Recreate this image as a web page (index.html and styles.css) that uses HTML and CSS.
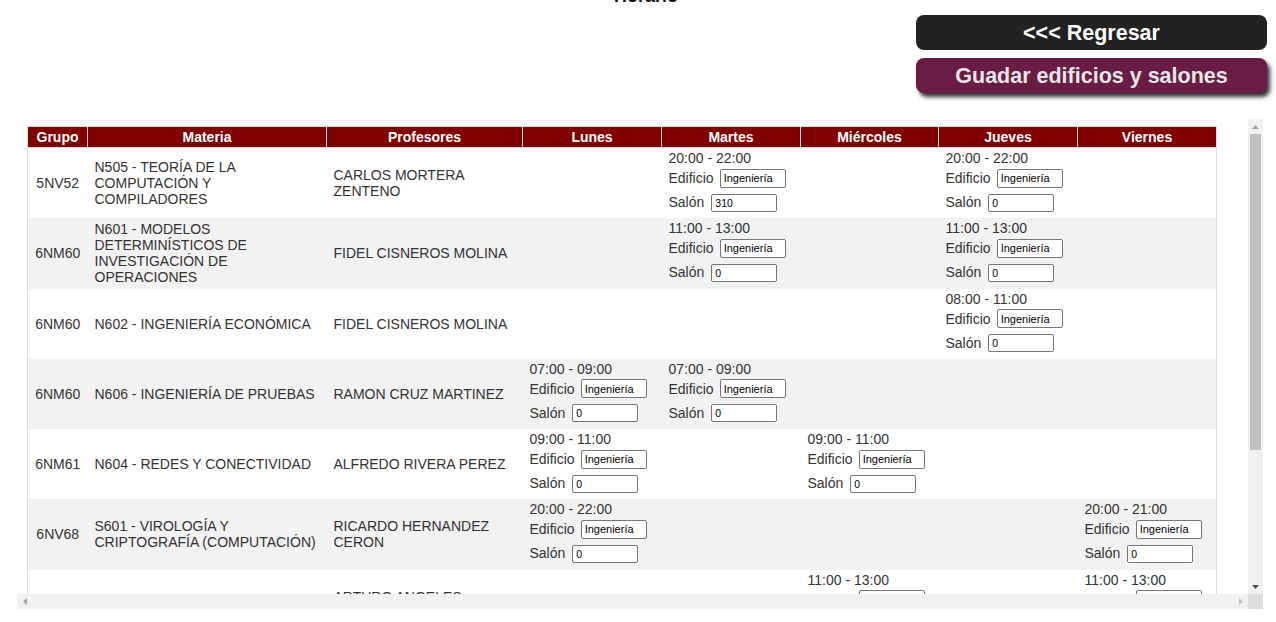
FILE: index.html
```html
<!DOCTYPE html>
<html lang="es">
<head>
<meta charset="utf-8">
<title>Horario</title>
<link rel="stylesheet" href="styles.css">
</head>
<body>
<h2 class="title">Horario</h2>
<div class="actions">
  <button class="btn btn-back">&lt;&lt;&lt; Regresar</button>
  <button class="btn btn-save">Guadar edificios y salones</button>
</div>
<div class="frame">
  <div class="viewport">
  <table class="schedule">
    <colgroup>
      <col class="c-grupo"><col class="c-materia"><col class="c-prof">
      <col class="c-day"><col class="c-day"><col class="c-day3"><col class="c-day"><col class="c-day">
    </colgroup>
    <thead>
      <tr><th>Grupo</th><th>Materia</th><th>Profesores</th><th>Lunes</th><th>Martes</th><th>Miércoles</th><th>Jueves</th><th>Viernes</th></tr>
    </thead>
    <tbody>
      <tr>
        <td class="grupo">5NV52</td><td>N505 - TEORÍA DE LA COMPUTACIÓN Y COMPILADORES</td><td>CARLOS MORTERA ZENTENO</td>
        <td></td>
        <td><div class="time">20:00 - 22:00</div><label class="field">Edificio<input class="in in-ed" value="Ingeniería"></label><label class="field">Salón<input class="in in-sal" value="310"></label></td>
        <td></td>
        <td><div class="time">20:00 - 22:00</div><label class="field">Edificio<input class="in in-ed" value="Ingeniería"></label><label class="field">Salón<input class="in in-sal" value="0"></label></td>
        <td></td>
      </tr>
      <tr>
        <td class="grupo">6NM60</td><td>N601 - MODELOS DETERMINÍSTICOS DE INVESTIGACIÓN DE OPERACIONES</td><td>FIDEL CISNEROS MOLINA</td>
        <td></td>
        <td><div class="time">11:00 - 13:00</div><label class="field">Edificio<input class="in in-ed" value="Ingeniería"></label><label class="field">Salón<input class="in in-sal" value="0"></label></td>
        <td></td>
        <td><div class="time">11:00 - 13:00</div><label class="field">Edificio<input class="in in-ed" value="Ingeniería"></label><label class="field">Salón<input class="in in-sal" value="0"></label></td>
        <td></td>
      </tr>
      <tr>
        <td class="grupo">6NM60</td><td>N602 - INGENIERÍA ECONÓMICA</td><td>FIDEL CISNEROS MOLINA</td>
        <td></td><td></td><td></td>
        <td><div class="time">08:00 - 11:00</div><label class="field">Edificio<input class="in in-ed" value="Ingeniería"></label><label class="field">Salón<input class="in in-sal" value="0"></label></td>
        <td></td>
      </tr>
      <tr>
        <td class="grupo">6NM60</td><td>N606 - INGENIERÍA DE PRUEBAS</td><td>RAMON CRUZ MARTINEZ</td>
        <td><div class="time">07:00 - 09:00</div><label class="field">Edificio<input class="in in-ed" value="Ingeniería"></label><label class="field">Salón<input class="in in-sal" value="0"></label></td>
        <td><div class="time">07:00 - 09:00</div><label class="field">Edificio<input class="in in-ed" value="Ingeniería"></label><label class="field">Salón<input class="in in-sal" value="0"></label></td>
        <td></td><td></td><td></td>
      </tr>
      <tr>
        <td class="grupo">6NM61</td><td>N604 - REDES Y CONECTIVIDAD</td><td>ALFREDO RIVERA PEREZ</td>
        <td><div class="time">09:00 - 11:00</div><label class="field">Edificio<input class="in in-ed" value="Ingeniería"></label><label class="field">Salón<input class="in in-sal" value="0"></label></td>
        <td></td>
        <td><div class="time">09:00 - 11:00</div><label class="field">Edificio<input class="in in-ed" value="Ingeniería"></label><label class="field">Salón<input class="in in-sal" value="0"></label></td>
        <td></td><td></td>
      </tr>
      <tr>
        <td class="grupo">6NV68</td><td>S601 - VIROLOGÍA Y CRIPTOGRAFÍA (COMPUTACIÓN)</td><td>RICARDO HERNANDEZ CERON</td>
        <td><div class="time">20:00 - 22:00</div><label class="field">Edificio<input class="in in-ed" value="Ingeniería"></label><label class="field">Salón<input class="in in-sal" value="0"></label></td>
        <td></td><td></td><td></td>
        <td><div class="time">20:00 - 21:00</div><label class="field">Edificio<input class="in in-ed" value="Ingeniería"></label><label class="field">Salón<input class="in in-sal" value="0"></label></td>
      </tr>
      <tr>
        <td class="grupo">6NV61</td><td>N607 - SISTEMAS DISTRIBUIDOS</td><td>ARTURO ANGELES CASTRO</td>
        <td></td><td></td>
        <td><div class="time">11:00 - 13:00</div><label class="field">Edificio<input class="in in-ed" value="Ingeniería"></label><label class="field">Salón<input class="in in-sal" value="0"></label></td>
        <td></td>
        <td><div class="time">11:00 - 13:00</div><label class="field">Edificio<input class="in in-ed" value="Ingeniería"></label><label class="field">Salón<input class="in in-sal" value="0"></label></td>
      </tr>
      <tr>
        <td class="grupo">6NV62</td><td>N608 - INTELIGENCIA ARTIFICIAL</td><td>MIGUEL SANTIAGO LOPEZ</td>
        <td><div class="time">13:00 - 15:00</div><label class="field">Edificio<input class="in in-ed" value="Ingeniería"></label><label class="field">Salón<input class="in in-sal" value="0"></label></td>
        <td></td><td></td>
        <td><div class="time">13:00 - 15:00</div><label class="field">Edificio<input class="in in-ed" value="Ingeniería"></label><label class="field">Salón<input class="in in-sal" value="0"></label></td>
        <td></td>
      </tr>
      <tr>
        <td class="grupo">6NV64</td><td>N609 - BASES DE DATOS</td><td>LAURA GARCIA MENDOZA</td>
        <td></td>
        <td><div class="time">15:00 - 17:00</div><label class="field">Edificio<input class="in in-ed" value="Ingeniería"></label><label class="field">Salón<input class="in in-sal" value="0"></label></td>
        <td></td><td></td>
        <td><div class="time">15:00 - 17:00</div><label class="field">Edificio<input class="in in-ed" value="Ingeniería"></label><label class="field">Salón<input class="in in-sal" value="0"></label></td>
      </tr>
    </tbody>
  </table>
  </div>
  <div class="vbar">
    <div class="arrow"><svg width="7" height="4" viewBox="0 0 7 4"><polygon points="0,4 7,4 3.5,0" fill="#a3a3a3"/></svg></div>
    <div class="vtrack"><div class="vthumb"></div></div>
    <div class="arrow"><svg width="7" height="4" viewBox="0 0 7 4"><polygon points="0,0 7,0 3.5,4" fill="#505050"/></svg></div>
  </div>
  <div class="hbar">
    <div class="arrow"><svg width="4" height="7" viewBox="0 0 4 7"><polygon points="4,0 4,7 0,3.5" fill="#a3a3a3"/></svg></div>
    <div class="htrack"></div>
    <div class="arrow"><svg width="4" height="7" viewBox="0 0 4 7"><polygon points="0,0 0,7 4,3.5" fill="#c2c2c2"/></svg></div>
  </div>
  <div class="corner"></div>
</div>
</body>
</html>
```
FILE: styles.css
```css
html, body {
  margin: 0;
  padding: 0;
  background: #fff;
  font-family: "Liberation Sans", Arial, sans-serif;
  color: #333;
}

.title {
  margin: -14px 0 0;
  padding-left: 16px;
  height: 21px;
  line-height: 21px;
  font-size: 18px;
  font-weight: bold;
  text-align: center;
  color: #111;
}

.actions {
  display: flex;
  flex-direction: column;
  align-items: flex-end;
  gap: 8px;
  margin-top: 8px;
  padding-right: 9px;
}

.btn {
  box-sizing: border-box;
  width: 351px;
  height: 35px;
  border: none;
  border-radius: 8px;
  font-family: "Liberation Sans", Arial, sans-serif;
  font-size: 21.5px;
  font-weight: bold;
  line-height: 31px;
  padding: 3px 0 1px;
  cursor: pointer;
}

.btn-back {
  background: #222;
  color: #fff;
}

.btn-save {
  background: #6b1c44;
  color: #e6e6e6;
  box-shadow: 3px 4px 4px #333;
}

.frame {
  margin: 26px 0 0 17px;
  width: 1246px;
  height: 490px;
  display: grid;
  grid-template-columns: 1231px 15px;
  grid-template-rows: 475px 15px;
}

.viewport {
  overflow: hidden;
  padding: 7px 0 0 10px;
  box-sizing: border-box;
}

.vbar {
  background: #f1f1f1;
  display: flex;
  flex-direction: column;
}

.hbar {
  background: #f1f1f1;
  display: flex;
  flex-direction: row;
}

.corner {
  background: #dcdcdc;
}

.arrow {
  flex: 0 0 15px;
  height: 15px;
  width: 15px;
  display: flex;
  align-items: center;
  justify-content: center;
}

.arrow svg {
  display: block;
}

.vtrack {
  flex: 1;
  padding: 0 2px;
}

.vthumb {
  height: 316px;
  background: #c1c1c1;
}

.htrack {
  flex: 1;
}

.schedule {
  border-collapse: collapse;
  table-layout: fixed;
  width: 1189px;
  border: 1px solid #ddd;
  font-size: 14px;
  line-height: 16px;
}

.c-grupo { width: 60px; }
.c-materia { width: 239px; }
.c-prof { width: 196px; }
.c-day { width: 139px; }
.c-day3 { width: 138px; }

.schedule th {
  background: #800000;
  color: #fff;
  font-weight: bold;
  text-align: center;
  padding: 2px 7px;
  border: 1px solid #ddd;
}

.schedule td {
  padding: 3px 7px 3.3px;
  vertical-align: middle;
  text-align: left;
}

.schedule tbody tr:nth-child(even) td {
  background: #f2f2f2;
}

.schedule td.grupo {
  text-align: center;
  padding-left: 2px;
  padding-right: 2px;
}

.time {
  height: 16px;
  line-height: 16px;
  margin-top: -1px;
}

.field {
  display: flex;
  align-items: center;
  gap: 6px;
  height: 24px;
}

.field:last-child {
  margin-bottom: 1px;
}

.in {
  box-sizing: border-box;
  width: 66px;
  height: 19px;
  margin: 0;
  padding: 0 3px;
  border: 1px solid #767676;
  border-radius: 2px;
  background: #fff;
  color: #000;
  font-family: "Liberation Sans", Arial, sans-serif;
  font-size: 11px;
}

.in-sal {
  height: 18px;
  font-size: 10.5px;
  margin-top: 1px;
  margin-left: 1px;
}
```
